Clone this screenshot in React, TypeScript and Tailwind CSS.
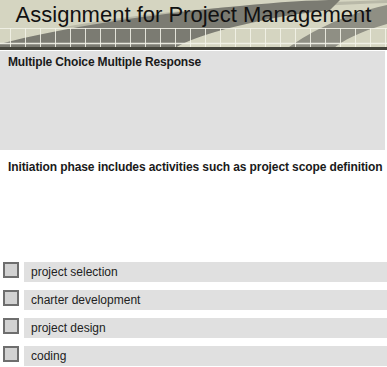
const options = ['project selection', 'charter development', 'project design', 'coding']

function HeaderArt() {
  const cols = Array.from({ length: 26 }, (_, i) => 10 + i * 15)
  return (
    <svg className="absolute inset-0" width="387" height="50" viewBox="0 0 387 50">
      <rect width="387" height="50" fill="#d5d5c1" />
      <path d="M60 28 C120 16 200 8 280 4 L387 0 L387 3 C300 6 220 12 150 24 Z" fill="#b9b9a8" />
      <path d="M0 44 C60 28 150 14 240 6 C280 2 310 0 340 0 L330 10 C290 14 250 22 215 32 C195 38 180 44 172 50 L0 50 Z" fill="#7b7b72" />
      <path d="M285 50 C305 35 340 15 387 5 L387 24 C362 31 342 40 332 50 Z" fill="#8f8f84" />
      <line x1="0" y1="28.5" x2="387" y2="28.5" stroke="#f4f4ea" strokeWidth="1" opacity="0.85" />
      <line x1="0" y1="43.5" x2="387" y2="43.5" stroke="#f4f4ea" strokeWidth="1.5" opacity="0.9" />
      {cols.map((x) => (
        <line key={x} x1={x + 0.5} y1="28" x2={x + 0.5} y2="48" stroke="#f4f4ea" strokeWidth="1" opacity="0.85" />
      ))}
      <rect y="47" width="387" height="4" fill="#45453c" />
    </svg>
  )
}

export default function App() {
  return (
    <div className="w-[387px] h-[367px] bg-white overflow-hidden text-[#1a1a1a]" style={{ fontFamily: '"Liberation Sans", Arial, sans-serif' }}>
      <div className="relative h-[51px]">
        <HeaderArt />
        <h1 className="relative text-center whitespace-nowrap text-[22px] leading-[28px] pt-[1px] text-[#111]">Assignment for Project Management</h1>
      </div>

      <div className="bg-[#e0e0e0] h-[99px] mr-[2px] px-[8px] pt-[4px]">
        <p className="text-[12px] font-bold leading-[15px] tracking-[-0.15px]">Multiple Choice Multiple Response</p>
      </div>

      <div className="h-[112px] px-[8px] pt-[10px]">
        <p className="text-[12px] font-bold leading-[15px] tracking-[-0.1px] whitespace-nowrap">Initiation phase includes activities such as project scope definition</p>
      </div>

      <div className="flex flex-col gap-[8px]">
        {options.map((o) => (
          <div key={o} className="flex items-start h-[20px]">
            <div className="ml-[3px] w-[16px] h-[16px] border-2 border-[#6e6e6e] bg-[#d2d2d2]" />
            <div className="ml-[5px] flex-1 h-[20px] bg-[#e0e0e0] pl-[7px] text-[12px] leading-[20px] text-[#222]">{o}</div>
          </div>
        ))}
      </div>
    </div>
  )
}
